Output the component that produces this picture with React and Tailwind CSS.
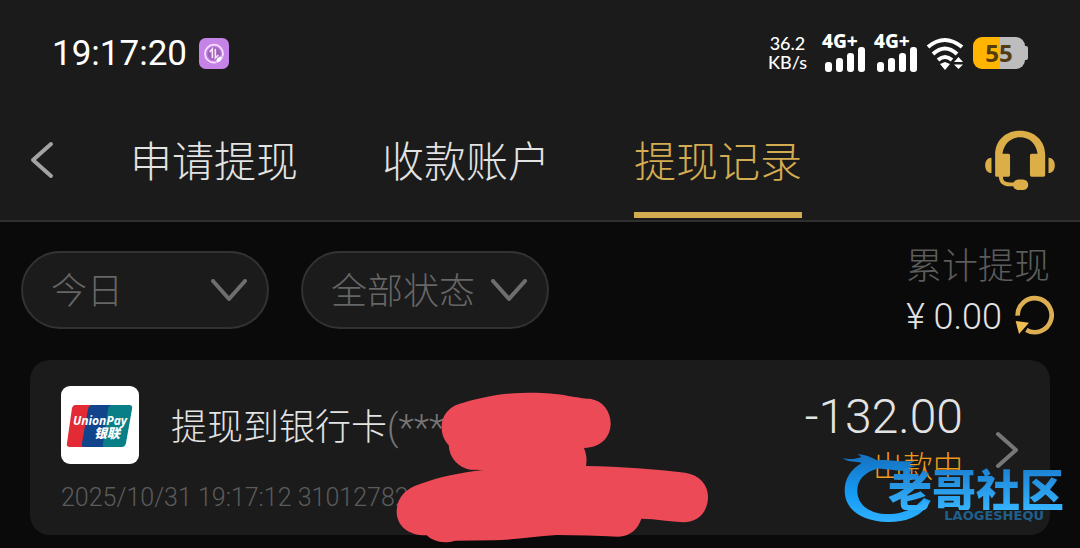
import * as React from "react";

const tabs = [
  { id: "apply", label: "申请提现" },
  { id: "account", label: "收款账户" },
  { id: "records", label: "提现记录" },
];

const dateOptions = ["今日", "昨日", "近七日"];
const statusOptions = ["全部状态", "出款中", "已完成"];

export default function App() {
  const [activeTab, setActiveTab] = React.useState("records");

  return (
    <div className="min-h-screen bg-[#0a0a0a] font-['Roboto','Noto_Sans_CJK_SC',sans-serif] font-light text-[#e3e3e3]">
      <header className="border-b-2 border-[#303030] bg-[#1b1b1b]">
        <StatusBar />

        <div className="flex items-center justify-between pb-[2px] pl-[30px] pr-[25px]">
          <div className="flex items-center gap-[76px]">
            <button type="button" aria-label="返回" className="pb-1">
              <svg viewBox="0 0 24 38" className="h-[38px] w-6" fill="none">
                <path d="M21 3 3 19l18 16" stroke="#a3a3a3" strokeWidth="4" strokeLinecap="round" strokeLinejoin="round" />
              </svg>
            </button>

            <nav className="flex gap-[84px]">
              {tabs.map((tab) => (
                <button
                  key={tab.id}
                  type="button"
                  onClick={() => setActiveTab(tab.id)}
                  className={`h-28 whitespace-nowrap border-b-6 pt-2 text-[42px] font-light leading-[48px] ${
                    activeTab === tab.id
                      ? "border-[#d3ac51] text-[#d3ac51]"
                      : "border-transparent"
                  }`}
                >
                  {tab.label}
                </button>
              ))}
            </nav>
          </div>

          <button type="button" aria-label="客服" className="pb-1">
            <HeadsetIcon />
          </button>
        </div>
      </header>

      <main className="px-[30px] pt-[15px]">
        <section className="-ml-[9px] flex items-center justify-between">
          <div className="flex gap-8">
            <Filter label="日期" options={dateOptions} />
            <Filter label="状态" options={statusOptions} />
          </div>

          <div className="pt-[5px] text-right text-[36px] leading-[50px]">
            <p className="text-[#5c5c5c]">累计提现</p>
            <div className="-mr-1 flex items-center justify-end gap-3">
              <span>¥ 0.00</span>
              <button type="button" aria-label="刷新" className="pb-1">
                <RefreshIcon />
              </button>
            </div>
          </div>
        </section>

        <RecordCard />
      </main>
    </div>
  );
}

function StatusBar() {
  return (
    <div className="flex h-[106px] items-center justify-between px-[52px] text-white">
      <div className="flex items-center gap-3">
        <span className="pt-[2px] text-[35px] font-normal leading-[40px]">19:17:20</span>
        <svg viewBox="0 0 90 93" className="h-[31px] w-[30px]" fill="none">
          <rect width="90" height="93" rx="20" fill="#c583e8" />
          <circle cx="45" cy="47" r="27" stroke="#fbe2ff" strokeWidth="5" />
          <circle cx="45" cy="47" r="20" fill="#9d62b8" />
          <path d="m32 42 8-9v28M49 32v28l9-9" stroke="#fbe2ff" strokeWidth="5" />
          <path d="M51 73c0-12 7-19 19-18 0 12-7 20-19 18Z" fill="#fff" stroke="#c583e8" strokeWidth="2" />
        </svg>
      </div>

      <div className="flex items-center">
        <div className="mr-[15px] text-center font-['Lato',sans-serif] text-[18px] font-medium leading-[19px]">
          <p>36.2</p>
          <p>KB/s</p>
        </div>
        <Signal />
        <Signal />
        <svg viewBox="0 0 38 33" className="mr-[9px] h-[33px] w-[38px]" fill="none">
          <path d="M2 10Q18.500-4 36 10M7 17q12-11 24 0M12 23q7-6 14 0" stroke="#fff" strokeWidth="4" />
          <path d="m14 27 5-2 5 2-5 6ZM28 25l4.500-5 4.500 5ZM28 27.500h9L32.500 32Z" fill="#fff" />
        </svg>
        <div className="flex items-center">
          <div className="h-8 w-[52px] rounded-[9px] bg-linear-to-r from-[#ffb400] from-52% to-[#bdbdbd] to-52% text-center font-['Noto_Sans',sans-serif] text-[24px] font-bold leading-8 text-[#533b12]">
            55
          </div>
          <div className="h-[14px] w-[3px] rounded-r-[2px] bg-[#bdbdbd]" />
        </div>
      </div>
    </div>
  );
}

function Signal() {
  return (
    <div className="mr-[9px] w-[43px]">
      <p className="h-[13px] font-['Noto_Sans',sans-serif] text-[19px] font-extrabold leading-[15px]">4G+</p>
      <svg viewBox="0 0 43 25" className="h-[25px] w-[43px]" fill="#fff">
        <rect x="3" y="15" width="7" height="10" rx="3" />
        <rect x="14" y="11" width="7" height="14" rx="3" />
        <rect x="25" y="6" width="7" height="19" rx="3" />
        <rect x="36" y="0" width="7" height="25" rx="3" />
      </svg>
    </div>
  );
}

function Filter({ label, options }) {
  return (
    <div className="relative">
      <select
        aria-label={label}
        className="h-[78px] w-[248px] appearance-none rounded-full border-2 border-[#323232] bg-[#1b1b1b] pl-7 pt-1 text-[36px] text-[#666] outline-none"
      >
        {options.map((option) => (
          <option key={option}>{option}</option>
        ))}
      </select>
      <svg
        viewBox="0 0 38 24"
        className="pointer-events-none absolute right-[21px] top-[28px] h-6 w-[38px]"
        fill="none"
      >
        <path d="m3 2 16 18L35 2" stroke="#6e6e6e" strokeWidth="4" strokeLinecap="round" strokeLinejoin="round" />
      </svg>
    </div>
  );
}

function RecordCard() {
  return (
    <article className="relative mt-[18px] flex justify-between rounded-[20px] bg-[#1b1b1b] pb-[22px] pl-[31px] pr-[31px] pt-[26px]">
      <div>
        <div className="flex items-center gap-8">
          <UnionPayLogo />
          <h2 className="whitespace-nowrap pt-[6px] text-[36px] leading-[50px]">
            提现到银行卡<span className="text-[#777]">(***</span>
          </h2>
        </div>
        <p className="mt-[19px] whitespace-nowrap text-[25px] leading-[30px] text-[#5c5c5c]">
          2025/10/31 19:17:12 31012782
        </p>
      </div>

      <div className="flex gap-8">
        <div className="pt-[2px] text-right">
          <p className="text-[48px] leading-[58px]">-132.00</p>
          <p className="text-[30px] leading-[42px] text-[#f09a1c]">出款中</p>
        </div>
        <button type="button" aria-label="查看详情">
          <svg viewBox="0 0 24 38" className="h-[38px] w-6" fill="none">
            <path d="m3 3 18 16L3 35" stroke="#777" strokeWidth="4" strokeLinecap="round" strokeLinejoin="round" />
          </svg>
        </button>
      </div>

      {/* marker strokes over the account number */}
      <svg viewBox="0 0 1050 504" className="absolute left-[350px] top-5 h-[168px] w-[350px]" fill="#ec4a57">
        <path d="M185 140C185 100 215 75 250 68C330 46 370 38 470 38C550 40 590 55 630 56C670 62 692 95 692 130C692 170 665 203 612 204C620 225 621 240 618 258C720 260 830 268 915 278C960 285 984 315 984 350C984 395 955 427 910 427C870 425 830 417 784 416C775 445 750 470 715 470C650 468 590 465 530 465C460 470 400 480 340 481L225 482C190 492 160 485 140 466C90 468 50 440 50 395C50 350 80 325 120 312C180 290 240 278 310 270L270 269C235 262 208 235 206 195C190 178 185 160 185 140Z" />
      </svg>

      <Watermark />
    </article>
  );
}

function Watermark() {
  return (
    <div className="pointer-events-none absolute -right-[14px] top-[91px] flex">
      <svg viewBox="180 240 280 220" className="h-[73px] w-[93px]">
        <defs>
          <linearGradient id="swoosh" x1="0" y1="0" x2="0" y2="1">
            <stop offset="0" stopColor="#1671bf" />
            <stop offset="0.6" stopColor="#159cf5" />
            <stop offset="1" stopColor="#2fb0ff" />
          </linearGradient>
        </defs>
        <path
          d="M185 262C205 266 225 264 242 258L229 249C260 252 272 260 288 268C325 263 350 275 402 270C385 278 380 284 405 285C375 292 380 296 400 301C355 302 325 295 290 293C250 305 229 327 229 361C230 405 270 430 320 430C370 430 405 412 430 382L450 390C430 430 385 455 320 454C240 452 191 415 191 360C191 322 210 295 242 276C223 270 207 276 185 262Z"
          fill="url(#swoosh)"
        />
      </svg>
      <div className="-ml-[46px] pt-[15px] font-['Noto_Sans_CJK_SC',sans-serif]">
        <p className="bg-linear-to-b from-[#1b7fd0] to-[#36b4ff] bg-clip-text text-[44px] font-black leading-[44px] text-transparent">
          老哥社区
        </p>
        <p className="pr-5 text-right font-['DejaVu_Sans',sans-serif] text-[13px] font-bold leading-[12px] text-[#1f5f8c]">
          LAOGESHEQU
        </p>
      </div>
    </div>
  );
}

function HeadsetIcon() {
  return (
    <svg viewBox="0 0 210 184" className="h-[61px] w-[70px]" fill="#dbae48">
      <path d="M30 75v62q0 4 4 4h36q5 0 5-5V77q0-5-5-5H52c4-30 24-50 53-50s49 20 53 50h-18q-5 0-5 5v59q0 5 5 5h36q5 0 5-5V75C181 31 148 2 105 2S30 31 30 75Z" />
      <path d="M19 84v46C7 130 0 120 0 107s7-23 19-23ZM191 84v46c12 0 19-10 19-23s-7-23-19-23Z" />
      <path d="M47 138c0 19 9 26 28 26h20" fill="none" stroke="#dbae48" strokeWidth="12" />
      <rect x="84" y="149" width="46" height="32" rx="16" />
    </svg>
  );
}

function RefreshIcon() {
  return (
    <svg viewBox="0 0 120 120" className="block size-10" fill="none">
      <path d="M11 62a51 51 0 1 1 26 43" stroke="#dcb052" strokeWidth="14" />
      <path d="m5 78 40 5-30 34Z" fill="#f0bd50" />
    </svg>
  );
}

function UnionPayLogo() {
  return (
    <svg viewBox="0 0 78 78" className="size-[78px] shrink-0 rounded-[9px] bg-white">
      <path d="M14 19h17l-8 42H9q-4 0-3-4l5-35q1-3 3-3Z" fill="#e22b35" />
      <path d="M31 19h20l-7 42H23q-3 0-2-4l6-34q1-4 4-4Z" fill="#11448a" />
      <path d="M51 19h17q4 0 3 4l-6 34q-1 4-4 4H43q-2 0-1-4l5-34q1-4 4-4Z" fill="#087f86" />
      <text x="12" y="39" fill="#fff" className="font-['Open_Sans',sans-serif] text-[12px] font-bold italic">
        UnionPay
      </text>
      <text x="33" y="52" fill="#fff" className="font-['Noto_Sans_CJK_SC',sans-serif] text-[13px] font-black italic">
        银联
      </text>
    </svg>
  );
}
